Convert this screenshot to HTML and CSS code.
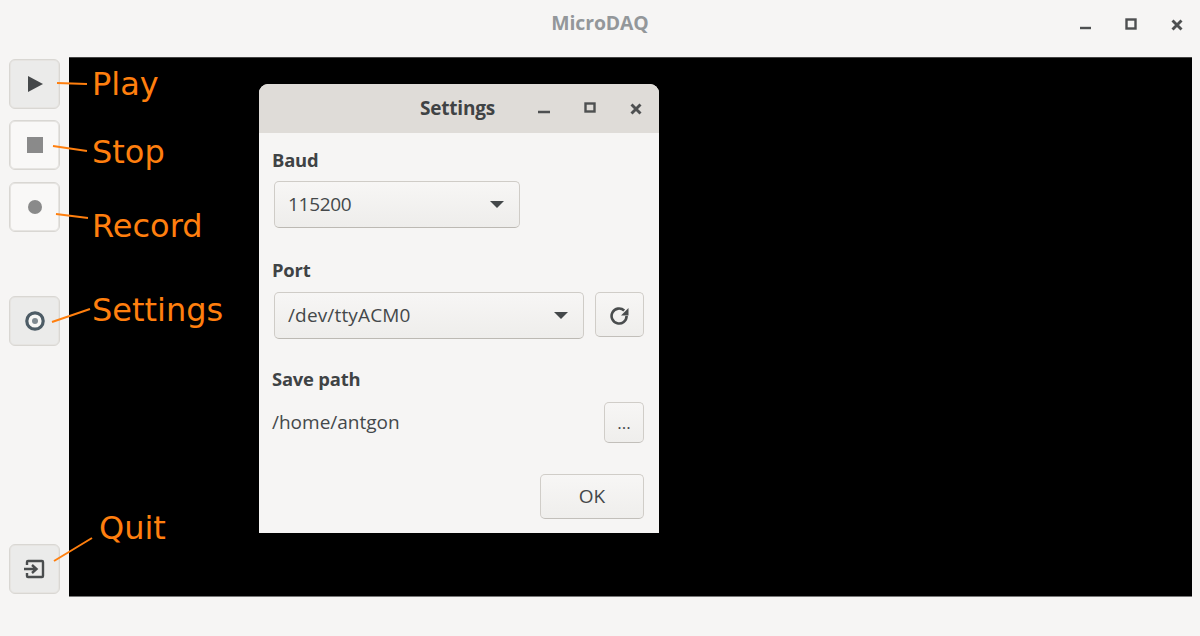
FILE: index.html
```html
<!DOCTYPE html>
<html lang="en">
<head>
<meta charset="utf-8">
<title>MicroDAQ</title>
<link rel="stylesheet" href="styles.css">
</head>
<body>
<div class="app">
  <header class="titlebar">
    <span class="app-title">MicroDAQ</span>
    <div class="win-controls main-controls">
      <svg class="wc" width="14" height="14" viewBox="0 0 14 14"><path d="M2 11h11" class="wc-line"/></svg>
      <svg class="wc" width="14" height="14" viewBox="0 0 14 14"><rect x="2.500" y="2.500" width="9" height="9" class="wc-line"/></svg>
      <svg class="wc" width="14" height="14" viewBox="0 0 14 14"><path d="M2.500 3.500l9 9M11.500 3.500l-9 9" class="wc-close"/></svg>
    </div>
  </header>
  <div class="workspace">
    <nav class="sidebar">
      <button class="tool tool-hover">
        <svg width="16" height="16" viewBox="0 0 16 16"><path d="M1 0l15 8-15 8z" fill="#45484a"/></svg>
      </button>
      <button class="tool tool-light gap-stop">
        <svg width="18" height="18" viewBox="0 0 18 18"><rect x="1" y="1" width="16" height="16" fill="#8a8a8a"/></svg>
      </button>
      <button class="tool tool-light gap-record">
        <svg width="16" height="16" viewBox="0 0 16 16"><circle cx="8" cy="8" r="7" fill="#8a8a8a"/></svg>
      </button>
      <button class="tool tool-hover gap-settings">
        <svg width="20" height="20" viewBox="0 0 20 20"><circle cx="10" cy="10" r="8.200" fill="#f7f7f6" stroke="#4d5c66" stroke-width="3.200"/><circle cx="10" cy="10" r="3" fill="#7f8a91"/></svg>
      </button>
      <button class="tool tool-hover gap-quit">
        <svg width="22" height="20" viewBox="0 0 22 20"><path d="M3 6V3a1 1 0 0 1 1-1h14a1 1 0 0 1 1 1v14a1 1 0 0 1-1 1H4a1 1 0 0 1-1-1v-3" fill="none" stroke="#4a4d4e" stroke-width="2.400"/><path d="M0 10h12M8 6l4.500 4-4.500 4" fill="none" stroke="#4a4d4e" stroke-width="2.400"/></svg>
      </button>
    </nav>
    <main class="canvas"></main>
  </div>

  <section class="dialog">
    <header class="dlg-head">
      <span class="dlg-title">Settings</span>
      <div class="win-controls dlg-controls">
        <svg class="wc" width="14" height="14" viewBox="0 0 14 14"><path d="M1 11h12" class="wc-line"/></svg>
        <svg class="wc" width="14" height="14" viewBox="0 0 14 14"><rect x="2.500" y="2.500" width="9" height="8" class="wc-line"/></svg>
        <svg class="wc" width="14" height="14" viewBox="0 0 14 14"><path d="M2.500 3.500l9 9M11.500 3.500l-9 9" class="wc-close"/></svg>
      </div>
    </header>
    <div class="dlg-body">
      <div class="label l-baud">Baud</div>
      <div class="row r-baud">
        <div class="combo combo-baud"><span>115200</span><i class="caret"></i></div>
      </div>
      <div class="label l-port">Port</div>
      <div class="row r-port">
        <div class="combo combo-port"><span>/dev/ttyACM0</span><i class="caret"></i></div>
        <button class="btn btn-refresh">
          <svg width="20" height="20" viewBox="0 0 20 20"><path d="M16.600 11a7.500 7.500 0 1 1-2.400-5.500" fill="none" stroke="#4a4d4e" stroke-width="2.600"/><path d="M18.500 3v7.500H11z" fill="#4a4d4e"/></svg>
        </button>
      </div>
      <div class="label l-save">Save path</div>
      <div class="row r-save">
        <span class="path">/home/antgon</span>
        <button class="btn btn-dots">...</button>
      </div>
      <div class="row r-ok"><button class="btn btn-ok">OK</button></div>
    </div>
  </section>

  <svg class="leaders" width="1200" height="636" viewBox="0 0 1200 636">
    <path d="M57 83l30 1M53 146l34 5M56 214l32 4M52 322l38-13M54 561l38-23"/>
  </svg>
  <span class="note n-play">Play</span>
  <span class="note n-stop">Stop</span>
  <span class="note n-record">Record</span>
  <span class="note n-settings">Settings</span>
  <span class="note n-quit">Quit</span>
</div>
</body>
</html>
```
FILE: styles.css
```css
* { box-sizing: border-box; }
html, body { margin: 0; padding: 0; height: 100%; }
body { background: #f6f5f4; overflow: hidden; font-family: "Open Sans", "Noto Sans", "Liberation Sans", sans-serif; color: #3d4244; }
.app { position: relative; width: 1200px; height: 636px; display: flex; flex-direction: column; }

.titlebar { height: 57px; flex: none; display: flex; align-items: center; justify-content: center; position: relative; }
.app-title { font-size: 19.400px; font-weight: 700; color: #93979a; margin-top: -13px; letter-spacing: -0.1px; }
.win-controls { position: absolute; display: flex; }
.main-controls { left: 1078px; top: 17px; gap: 32px; }
.wc { display: block; flex: none; }
.wc-line { fill: none; stroke: #4e5051; stroke-width: 2.400; }
.wc-close { fill: none; stroke: #4e5051; stroke-width: 2.900; }

.workspace { display: flex; height: 539px; flex: none; }
.sidebar { width: 69px; flex: none; padding: 2px 0 0 9px; display: flex; flex-direction: column; }
.tool { width: 51px; height: 50px; flex: none; padding: 0; display: flex; align-items: center; justify-content: center; border: 1px solid #d9d7d3; border-radius: 6px; box-shadow: inset 0 0 0 1px #e6e4e1; }
.tool-hover { background: #ebebea; }
.tool-light { background: #f9f8f7; }
.gap-stop { margin-top: 11px; }
.gap-record { margin-top: 12px; }
.gap-settings { margin-top: 64px; }
.gap-quit { margin-top: 198px; }
.canvas { width: 1123px; height: 540px; flex: none; background: #000; border-top: 1px solid #444; border-bottom: 1px solid #777; }

.dialog { position: absolute; left: 259px; top: 84px; width: 400px; height: 449px; background: #f6f5f4; border-radius: 9px 9px 0 0; overflow: hidden; display: flex; flex-direction: column; }
.dlg-head { height: 49px; flex: none; background: #dfdcd8; position: relative; display: flex; align-items: center; justify-content: center; }
.dlg-title { font-size: 19px; font-weight: 700; color: #3f4345; letter-spacing: -0.2px; margin-top: -1px; margin-left: -3px; }
.dlg-controls { left: 278px; top: 17px; gap: 32px; }
.dlg-body { flex: 1; padding: 0 15px 0 13px; display: flex; flex-direction: column; }

.label { font-size: 18.400px; font-weight: 700; color: #3f4345; line-height: 24px; letter-spacing: -0.2px; }
.l-baud { margin-top: 15px; }
.l-port { margin-top: 30px; }
.l-save { margin-top: 28px; }
.row { display: flex; align-items: flex-start; }
.r-baud { margin-top: 9px; margin-left: 2px; }
.r-port { margin-top: 10px; margin-left: 2px; gap: 11px; }
.r-save { margin-top: 11px; justify-content: space-between; align-items: center; }
.r-ok { margin-top: 31px; justify-content: flex-end; }

.combo { height: 47px; display: flex; align-items: center; justify-content: space-between; padding: 0 15px 2px 13px; border: 1px solid #cfccc7; border-bottom-color: #bcb9b3; border-radius: 5px; background: linear-gradient(#f7f6f5, #eeedeb); font-size: 19px; color: #44484a; }
.combo-baud { width: 246px; letter-spacing: -0.3px; }
.combo-port { width: 310px; letter-spacing: 0.150px; }
.caret { width: 0; height: 0; margin-top: 1px; border-left: 7px solid transparent; border-right: 7px solid transparent; border-top: 7px solid #44484a; }

.btn { padding: 0; display: flex; align-items: center; justify-content: center; border: 1px solid #d0cdc8; border-bottom-color: #c2bfba; border-radius: 5px; background: linear-gradient(#f7f6f5, #efeeec); color: #44484a; font-family: inherit; }
.btn-refresh { width: 49px; height: 45px; }
.btn-dots { width: 40px; height: 41px; font-size: 17px; }
.btn-ok { width: 104px; height: 45px; font-size: 19px; padding-bottom: 2px; }
.path { font-size: 19px; color: #44484a; padding-bottom: 2px; }

.leaders { position: absolute; left: 0; top: 0; pointer-events: none; }
.leaders path { fill: none; stroke: #ff7f0e; stroke-width: 2; }
.note { position: absolute; font-family: "DejaVu Sans", sans-serif; font-size: 32px; line-height: 38px; color: #ff7f0e; }
.n-play { left: 92px; top: 65px; }
.n-stop { left: 92px; top: 133px; }
.n-record { left: 92px; top: 207px; }
.n-settings { left: 92px; top: 291px; }
.n-quit { left: 99px; top: 509px; }
```
